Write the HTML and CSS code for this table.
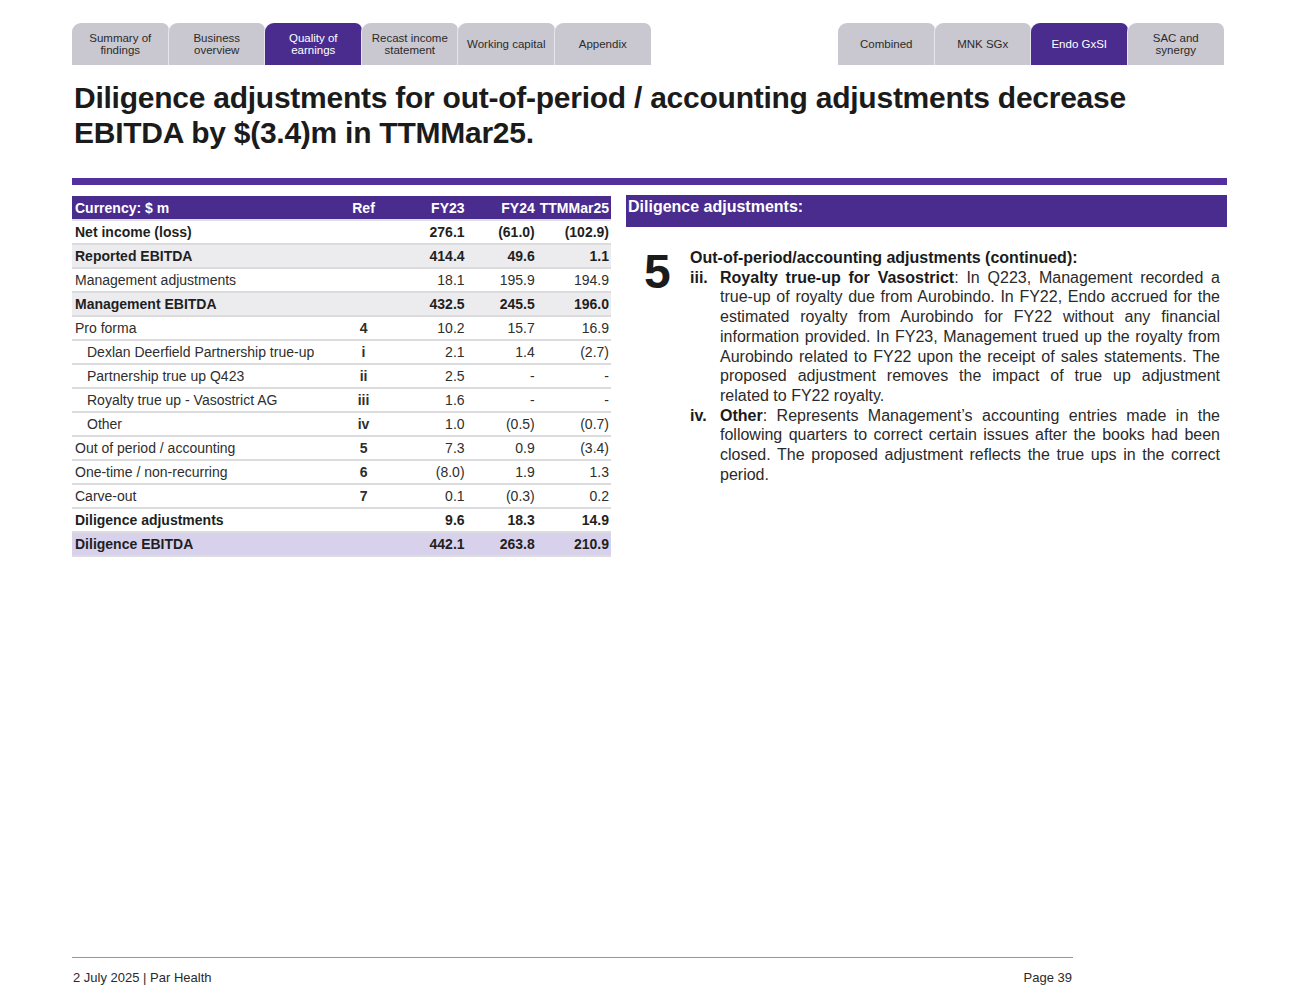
FILE: index.html
```html
<!DOCTYPE html>
<html>
<head>
<meta charset="utf-8">
<link rel="stylesheet" href="styles.css">
</head>
<body>
<div class="page">
  <nav class="tabbar">
    <div class="tabs">
      <div class="tab">Summary of<br>findings</div>
      <div class="tab">Business<br>overview</div>
      <div class="tab active">Quality of<br>earnings</div>
      <div class="tab">Recast income<br>statement</div>
      <div class="tab">Working capital</div>
      <div class="tab">Appendix</div>
    </div>
    <div class="tabs">
      <div class="tab">Combined</div>
      <div class="tab">MNK SGx</div>
      <div class="tab active">Endo GxSI</div>
      <div class="tab">SAC and<br>synergy</div>
    </div>
  </nav>

  <h1 class="title">Diligence adjustments for out-of-period / accounting adjustments decrease EBITDA by $(3.4)m in TTMMar25.</h1>

  <div class="stripe"></div>

  <main class="content">
    <table class="fin">
      <thead>
        <tr><th class="lbl">Currency: $ m</th><th class="ref">Ref</th><th class="num">FY23</th><th class="num">FY24</th><th class="num">TTMMar25</th></tr>
      </thead>
      <tbody>
        <tr class="bold"><td class="lbl">Net income (loss)</td><td class="ref"></td><td class="num">276.1</td><td class="num">(61.0)</td><td class="num">(102.9)</td></tr>
        <tr class="bold grey"><td class="lbl">Reported EBITDA</td><td class="ref"></td><td class="num">414.4</td><td class="num">49.6</td><td class="num">1.1</td></tr>
        <tr><td class="lbl">Management adjustments</td><td class="ref"></td><td class="num">18.1</td><td class="num">195.9</td><td class="num">194.9</td></tr>
        <tr class="bold grey"><td class="lbl">Management EBITDA</td><td class="ref"></td><td class="num">432.5</td><td class="num">245.5</td><td class="num">196.0</td></tr>
        <tr><td class="lbl">Pro forma</td><td class="ref b">4</td><td class="num">10.2</td><td class="num">15.7</td><td class="num">16.9</td></tr>
        <tr><td class="lbl ind">Dexlan Deerfield Partnership true-up</td><td class="ref b">i</td><td class="num">2.1</td><td class="num">1.4</td><td class="num">(2.7)</td></tr>
        <tr><td class="lbl ind">Partnership true up Q423</td><td class="ref b">ii</td><td class="num">2.5</td><td class="num">-</td><td class="num">-</td></tr>
        <tr><td class="lbl ind">Royalty true up - Vasostrict AG</td><td class="ref b">iii</td><td class="num">1.6</td><td class="num">-</td><td class="num">-</td></tr>
        <tr><td class="lbl ind">Other</td><td class="ref b">iv</td><td class="num">1.0</td><td class="num">(0.5)</td><td class="num">(0.7)</td></tr>
        <tr><td class="lbl">Out of period / accounting</td><td class="ref b">5</td><td class="num">7.3</td><td class="num">0.9</td><td class="num">(3.4)</td></tr>
        <tr><td class="lbl">One-time / non-recurring</td><td class="ref b">6</td><td class="num">(8.0)</td><td class="num">1.9</td><td class="num">1.3</td></tr>
        <tr><td class="lbl">Carve-out</td><td class="ref b">7</td><td class="num">0.1</td><td class="num">(0.3)</td><td class="num">0.2</td></tr>
        <tr class="bold"><td class="lbl">Diligence adjustments</td><td class="ref"></td><td class="num">9.6</td><td class="num">18.3</td><td class="num">14.9</td></tr>
        <tr class="bold total"><td class="lbl">Diligence EBITDA</td><td class="ref"></td><td class="num">442.1</td><td class="num">263.8</td><td class="num">210.9</td></tr>
      </tbody>
    </table>

    <section class="panel">
      <div class="panel-head">Diligence adjustments:</div>
      <div class="panel-body">
        <div class="bignum">5</div>
        <div class="notes">
          <p class="lead">Out-of-period/accounting adjustments (continued):</p>
          <div class="item">
            <span class="mk">iii.</span>
            <p><b>Royalty true-up for Vasostrict</b>: In Q223, Management recorded a true-up of royalty due from Aurobindo. In FY22, Endo accrued for the estimated royalty from Aurobindo for FY22 without any financial information provided. In FY23, Management trued up the royalty from Aurobindo related to FY22 upon the receipt of sales statements. The proposed adjustment removes the impact of true up adjustment related to FY22 royalty.</p>
          </div>
          <div class="item">
            <span class="mk">iv.</span>
            <p><b>Other</b>: Represents Management’s accounting entries made in the following quarters to correct certain issues after the books had been closed. The proposed adjustment reflects the true ups in the correct period.</p>
          </div>
        </div>
      </div>
    </section>
  </main>

  <footer class="footer">
    <span>2 July 2025 | Par Health</span>
    <span>Page 39</span>
  </footer>
</div>
</body>
</html>
```

FILE: styles.css
```css
* { box-sizing: border-box; }
html, body { margin: 0; padding: 0; background: #fff; }
body { font-family: "Liberation Sans", Arial, sans-serif; color: #222; }

.page {
  width: 1300px;
  height: 1005px;
  display: flex;
  flex-direction: column;
  padding: 23px 0 0 0;
}

.tabbar {
  display: flex;
  justify-content: space-between;
  padding: 0 76px 0 72px;
}
.tabs { display: flex; }
.tab {
  width: 96.5px;
  height: 42px;
  background: #c9c7d0;
  color: #2b2b2b;
  font-size: 11.5px;
  line-height: 12px;
  text-align: center;
  display: flex;
  align-items: center;
  justify-content: center;
  border-radius: 9px 7px 0 0;
  box-shadow: -1px 0 0 #e6e5ea;
}
.tabs .tab:first-child { box-shadow: none; }
.tab.active { background: #4a2c8f; color: #fff; }

.title {
  margin: 15px 0 0 74px;
  width: 1100px;
  font-size: 30px;
  line-height: 35px;
  font-weight: bold;
  color: #1b1b1b;
  letter-spacing: -0.25px;
}

.stripe {
  margin: 28px 73px 0 72px;
  height: 7px;
  background: #54309e;
}

.content {
  display: flex;
  gap: 15px;
  padding: 10px 73px 0 72px;
  align-items: flex-start;
}

.fin {
  width: 539px;
  border-collapse: collapse;
  font-size: 14px;
  color: #2e2e2e;
  margin-top: 1px;
}
.fin th, .fin td {
  height: 24px;
  padding: 0 2px 0 3px;
  border-bottom: 2px solid #dcdcde;
  white-space: nowrap;
}
.fin thead th {
  background: #4a2c8f;
  color: #fff;
  font-weight: bold;
  height: 24px;
  border-bottom: 2px solid #e0dfe6;
}
.fin .lbl { text-align: left; width: 258px; }
.fin .ind { padding-left: 15px; }
.fin .ref { text-align: center; width: 68px; }
.fin .b { font-weight: bold; }
.fin .num { text-align: right; width: 71px; }
.fin tr.bold td { font-weight: bold; color: #1f1f1f; }
.fin tr.grey td { background: #ececef; }
.fin tr.total td { background: #d8d1ec; }

.panel { width: 601px; }
.panel-head {
  background: #4a2c8f;
  color: #fff;
  font-weight: bold;
  font-size: 16px;
  line-height: 20px;
  height: 32px;
  padding: 2px 2px;
}
.panel-body {
  display: flex;
  padding-top: 21px;
}
.bignum {
  width: 64px;
  padding-left: 18px;
  font-size: 48px;
  line-height: 48px;
  font-weight: bold;
  color: #1b1b1b;
}
.notes {
  width: 530px;
  font-size: 16px;
  line-height: 19.7px;
  color: #2a2a2a;
}
.notes p { margin: 0; }
.lead { font-weight: bold; color: #1b1b1b; }
.item { display: flex; }
.item .mk { width: 30px; flex: none; font-weight: bold; color: #1b1b1b; }
.item p { text-align: justify; flex: 1; }
.item b { color: #1b1b1b; }

.footer {
  margin: auto 227px 0 72px;
  border-top: 1px solid #9a90b4;
  padding: 12px 1px 19px 1px;
  display: flex;
  justify-content: space-between;
  font-size: 13px;
  line-height: 16px;
  color: #2a2a2a;
}
```
